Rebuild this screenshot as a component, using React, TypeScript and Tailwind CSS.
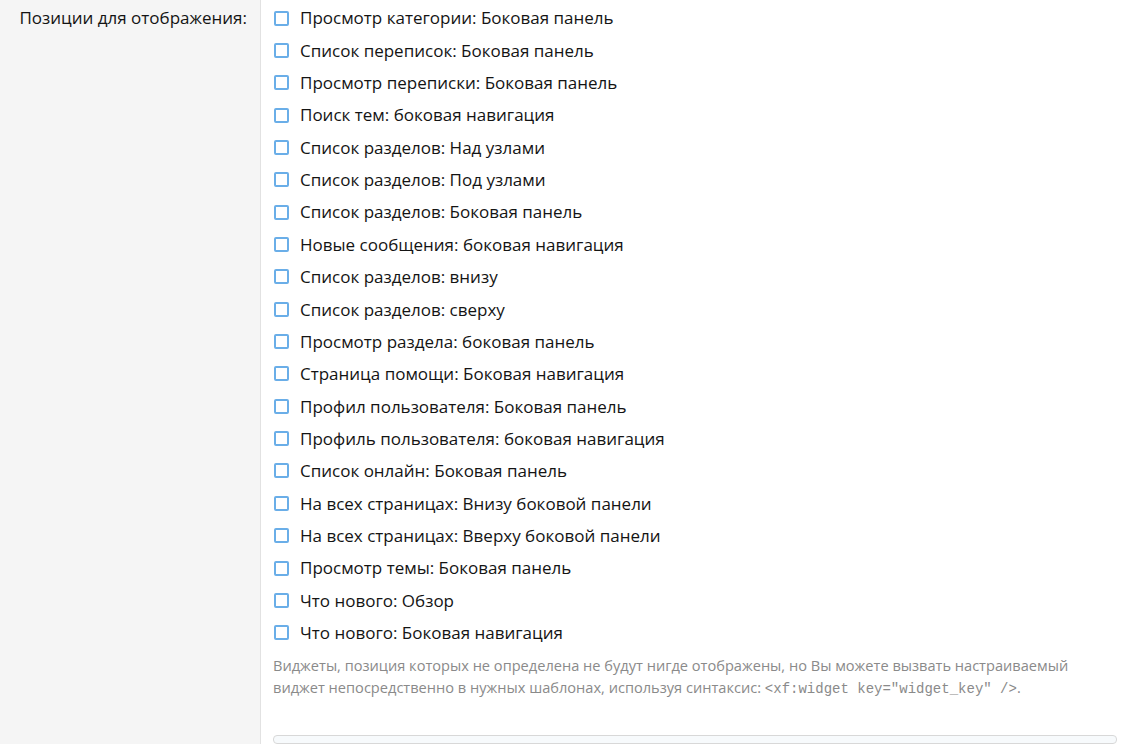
import React from "react";

const items = [
  "Просмотр категории: Боковая панель",
  "Список переписок: Боковая панель",
  "Просмотр переписки: Боковая панель",
  "Поиск тем: боковая навигация",
  "Список разделов: Над узлами",
  "Список разделов: Под узлами",
  "Список разделов: Боковая панель",
  "Новые сообщения: боковая навигация",
  "Список разделов: внизу",
  "Список разделов: сверху",
  "Просмотр раздела: боковая панель",
  "Страница помощи: Боковая навигация",
  "Профил пользователя: Боковая панель",
  "Профиль пользователя: боковая навигация",
  "Список онлайн: Боковая панель",
  "На всех страницах: Внизу боковой панели",
  "На всех страницах: Вверху боковой панели",
  "Просмотр темы: Боковая панель",
  "Что нового: Обзор",
  "Что нового: Боковая навигация",
];

export default function App() {
  return (
    <div
      className="flex w-[1129px] h-[744px] overflow-hidden bg-white text-[#141414]"
      style={{ fontFamily: '"Open Sans", "Noto Sans", sans-serif' }}
    >
      <div className="w-[261px] shrink-0 bg-[#f5f5f5] border-r border-[#e2e2e2] pt-[2px] pr-[13px] text-right">
        <div className="h-[32px] flex items-center justify-end text-[17px]">
          Позиции для отображения:
        </div>
      </div>
      <div className="flex-1 flex flex-col pt-[2px] px-[12px]">
        <div className="flex flex-col">
          {items.map((t) => (
            <label key={t} className="flex items-center h-[32.35px] text-[17px]">
              <span className="w-[15px] h-[15px] ml-[1px] shrink-0 rounded-[2px] border-2 border-[#6aaee8] bg-white" />
              <span className="ml-[11px]">{t}</span>
            </label>
          ))}
        </div>
        <div className="mt-[5px] text-[14.6px] leading-[22px] text-[#8a8a8a]">
          Виджеты, позиция которых не определена не будут нигде отображены, но Вы можете вызвать настраиваемый
          <br />
          виджет непосредственно в нужных шаблонах, используя синтаксис:{" "}
          <code style={{ fontFamily: '"Liberation Mono", monospace' }} className="text-[14px]">
            &lt;xf:widget key="widget_key" /&gt;
          </code>
          .
        </div>
        <div className="mt-[35px] h-[40px] rounded-[4px] border border-[#d8d8d8] bg-[#f7fafc]" />
      </div>
    </div>
  );
}
